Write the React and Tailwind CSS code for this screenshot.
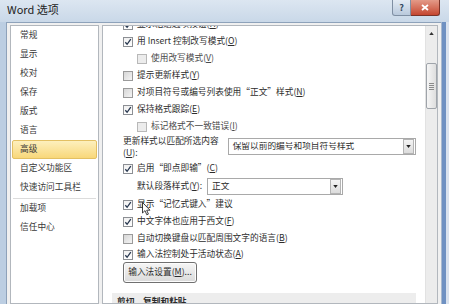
import React from 'react'

const navItems = ['常规', '显示', '校对', '保存', '版式', '语言', '高级', '自定义功能区', '快速访问工具栏']
const navMore = ['加载项', '信任中心']

function Box({ checked, dim }) {
  return (
    <span
      className={`w-[10px] h-[10px] shrink-0 border flex items-center justify-center ${
        dim
          ? 'border-[#b8b8b8] bg-[#ececec]'
          : checked
          ? 'border-[#8c8f94] bg-linear-to-b from-[#f0f0f0] to-[#ffffff]'
          : 'border-[#9a9a9a] bg-linear-to-br from-[#d6d6d6] to-[#f4f4f4]'
      }`}
    >
      {checked ? (
        <svg viewBox="0 0 8 8" className="w-[8px] h-[8px]">
          <path d="M1.3 4.3 L3.1 6.3 L6.8 1.2" stroke="#283850" strokeWidth="1.3" fill="none" />
        </svg>
      ) : null}
    </span>
  )
}

function Key({ k }) {
  return (
    <>
      (<span className="underline">{k}</span>)
    </>
  )
}

function Check({ checked, dim, sub, children, h = 'h-[17px]' }) {
  return (
    <div className={`${h} flex items-center gap-[4px] ${sub ? 'pl-[25px]' : 'pl-[11px]'}`}>
      <Box checked={checked} dim={dim} />
      <span className={`whitespace-nowrap ${dim ? 'text-[#4a4a4a]' : ''}`}>{children}</span>
    </div>
  )
}

function Select({ value, className }) {
  return (
    <div className={`h-[17px] border border-[#a9a9a9] bg-white flex items-center ${className}`}>
      <span className="flex-1 pl-[4px] whitespace-nowrap overflow-hidden">{value}</span>
      <span className="w-[11px] h-[15px] mr-[1px] border border-[#b4b4b4] bg-linear-to-b from-[#f4f4f4] to-[#dcdcdc] flex items-center justify-center">
        <svg viewBox="0 0 6 4" className="w-[5px] h-[3px]">
          <path d="M0 0 L6 0 L3 4 Z" fill="#222" />
        </svg>
      </span>
    </div>
  )
}

export default function App() {
  return (
    <div className="w-[449px] h-[304px] overflow-hidden flex flex-col bg-[#c9d8e9] text-[8.7px] leading-none text-[#2c2c2c] font-['Noto_Sans_CJK_SC','Noto_Sans',sans-serif]">
      {/* title bar */}
      <div className="h-[22px] shrink-0 flex items-start bg-linear-to-b from-[#dce6f1] to-[#c9d8e8]">
        <span className="pl-[7px] pt-[4px] text-[11px] text-[#222]">Word 选项</span>
        <div className="ml-auto mr-[9px] flex">
          <span className="w-[19px] h-[16px] border border-[#7f8fa3] border-t-0 rounded-bl-[3px] bg-linear-to-b from-[#e3ebf4] to-[#b9c9dc] flex items-center justify-center text-[9px] font-bold text-[#34475e]">
            ?
          </span>
          <span className="w-[29px] h-[16px] border border-[#7a3328] border-t-0 border-l-0 rounded-br-[3px] bg-linear-to-b from-[#e39a88] to-[#c4452f] flex items-center justify-center">
            <svg viewBox="0 0 8 7" className="w-[8px] h-[7px]">
              <path d="M1 1 L7 6 M7 1 L1 6" stroke="#fff" strokeWidth="1.8" />
            </svg>
          </span>
        </div>
      </div>

      <div className="flex flex-1 min-h-0">
        <div className="w-[6px] shrink-0 bg-[#bccee2]" />
        <div className="w-[435px] shrink-0 bg-[#f0f0f0] border-l border-t border-[#8ea2ba] flex gap-[3px] pl-[3px] pt-[2px]">
          {/* nav */}
          <div className="w-[89px] shrink-0 bg-white border border-[#b2b7bd] px-[1px] text-[#383838]">
            {navItems.map((n) => (
              <div
                key={n}
                className={`h-[19px] flex items-center pl-[7px] whitespace-nowrap ${
                  n === '高级'
                    ? 'border border-[#e3c063] rounded-[2px] bg-linear-to-b from-[#fdf0bd] to-[#f8d779]'
                    : 'border border-transparent'
                }`}
              >
                {n}
              </div>
            ))}
            <div className="h-px bg-[#dcdcdc] mx-[1px] mt-[1px]" />
            {navMore.map((n) => (
              <div key={n} className="h-[19px] flex items-center pl-[8px] whitespace-nowrap">
                {n}
              </div>
            ))}
          </div>

          {/* content */}
          <div className="w-[336px] shrink-0 bg-white border border-[#b2b7bd] flex">
            <div className="relative flex-1 min-w-0 overflow-hidden px-[9px]">
              <div className="-mt-[10px]">
                <Check checked>显示粘贴选项按钮<Key k="H" /></Check>
                <Check checked>用 Insert 控制改写模式<Key k="O" /></Check>
                <Check sub dim>使用改写模式<Key k="V" /></Check>
                <Check>提示更新样式<Key k="Y" /></Check>
                <Check>对项目符号或编号列表使用“正文”样式<Key k="N" /></Check>
                <Check checked>保持格式跟踪<Key k="E" /></Check>
                <Check sub dim>标记格式不一致错误<Key k="I" /></Check>
                <div className="h-[25px] flex items-start pl-[11px]">
                  <div className="w-[105px] leading-[12px] whitespace-nowrap">
                    更新样式以匹配所选内容
                    <br />
                    <Key k="U" />:
                  </div>
                  <Select value="保留以前的编号和项目符号样式" className="w-[189px] mt-[3px]" />
                </div>
                <Check checked>启用“即点即输”<Key k="C" /></Check>
                <div className="h-[19px] flex items-center pl-[25px]">
                  <span className="w-[70px] whitespace-nowrap">默认段落样式<Key k="Y" />:</span>
                  <Select value="正文" className="w-[136px]" />
                </div>
                <Check checked>显示“记忆式键入”建议</Check>
                <Check checked>中文字体也应用于西文<Key k="F" /></Check>
                <Check>自动切换键盘以匹配周围文字的语言<Key k="B" /></Check>
                <Check checked h="h-[15px]">输入法控制处于活动状态<Key k="A" /></Check>
                <div className="pl-[11px]">
                  <button className="w-[74px] h-[21px] border border-[#707070] rounded-[3px] bg-linear-to-b from-[#f6f6f6] to-[#dadada] shadow-[inset_0_0_0_1px_#fcfcfc] text-[8.7px] text-[#2c2c2c] whitespace-nowrap">
                    输入法设置<Key k="M" />...
                  </button>
                </div>
                <div className="mt-[10px] h-[30px] bg-[#ededed] pl-[5px] pt-[5px] font-bold text-[#2a2a2a]">
                  剪切、复制和粘贴
                </div>
              </div>

              {/* mouse pointer */}
              <svg viewBox="0 0 9 14" className="absolute left-[39px] top-[176px] w-[9px] h-[14px]">
                <path d="M0.5 0.5 L0.5 11 L3 8.6 L4.8 12.8 L6.4 12.1 L4.7 8.2 L8 8.2 Z" fill="#fff" stroke="#111" strokeWidth="0.8" />
              </svg>
            </div>

            {/* scrollbar */}
            <div className="w-[12px] shrink-0 bg-[#ececec] border-l border-[#e2e2e2] flex flex-col items-center">
              <div className="h-[12px] flex items-center justify-center mt-[1px]">
                <svg viewBox="0 0 6 4" className="w-[5px] h-[3px]">
                  <path d="M0 4 L6 4 L3 0 Z" fill="#333" />
                </svg>
              </div>
              <div className="mt-[24px] w-[11px] h-[46px] border border-[#9fa4aa] rounded-[2px] bg-linear-to-r from-[#f6f6f6] to-[#dedede] flex flex-col items-center justify-center gap-[1px]">
                <span className="w-[5px] h-px bg-[#8a8a8a]" />
                <span className="w-[5px] h-px bg-[#8a8a8a]" />
                <span className="w-[5px] h-px bg-[#8a8a8a]" />
                <span className="w-[5px] h-px bg-[#8a8a8a]" />
              </div>
            </div>
          </div>
        </div>
        <div className="w-[8px] shrink-0 flex">
          <div className="w-[5px] bg-[#6f91c2] border-l border-[#a8b9cf]" />
          <div className="flex-1 bg-[#d9e2ee]" />
        </div>
      </div>
    </div>
  )
}
